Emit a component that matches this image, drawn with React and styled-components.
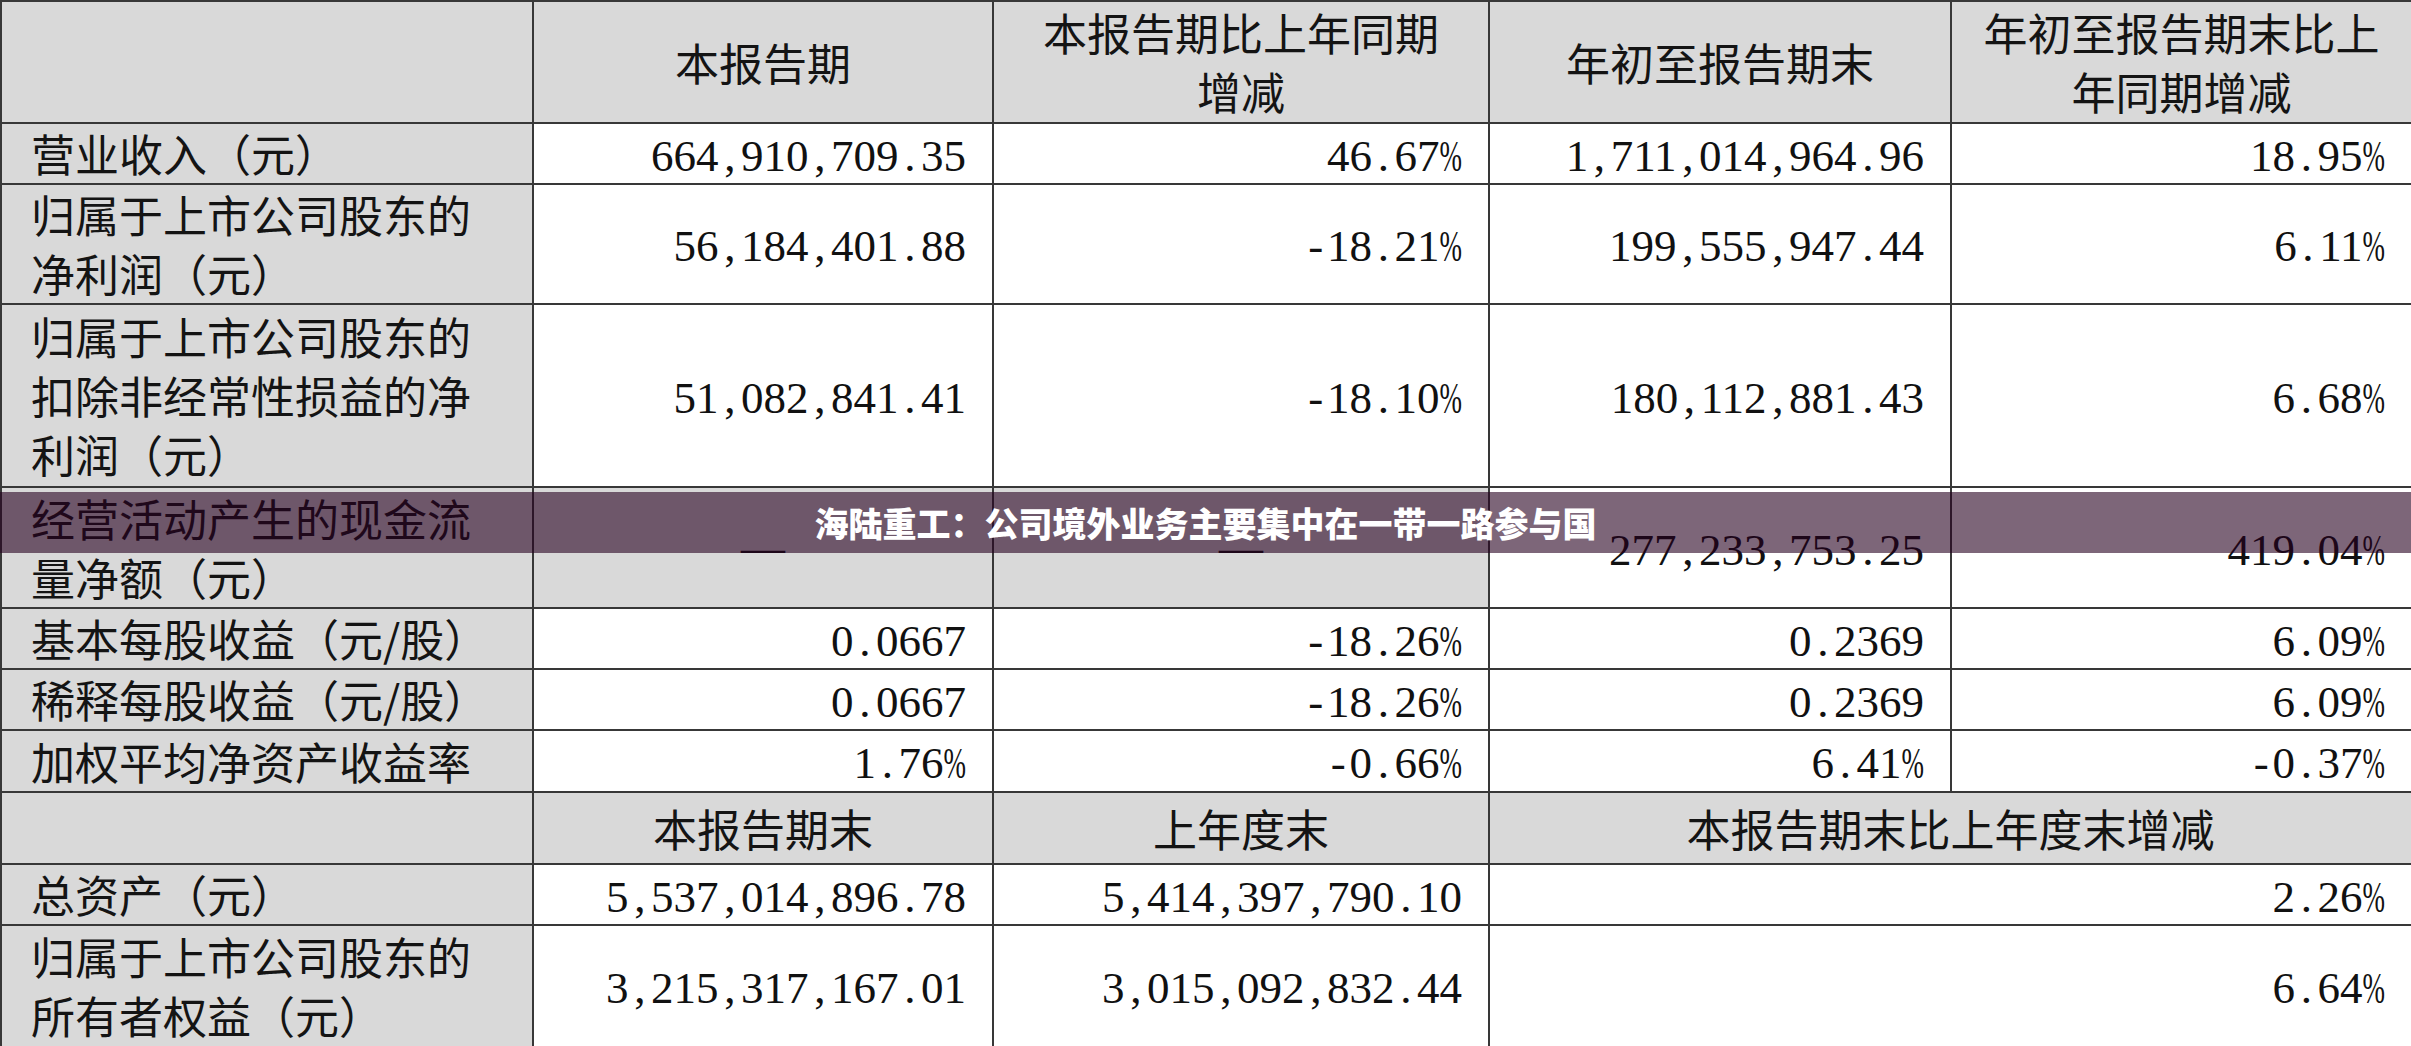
import React from 'react';
import styled, {createGlobalStyle} from 'styled-components';

const GlobalStyle = createGlobalStyle`
  html, body {
    margin: 0;
    padding: 0;
    background: #ffffff;
  }
  body {
    font-family: "Noto Sans CJK SC", sans-serif;
  }
`;

const COLUMNS = [532, 460, 496, 462, 461];

// kind: head (centred title), label (left text), num (right figure), dash (centred dash)
const ROWS = [
  {
    h: 122,
    cells: [
      {kind: 'head', shade: true, text: ''},
      {kind: 'head', shade: true, text: '本报告期'},
      {kind: 'head', shade: true, text: '本报告期比上年同期|增减'},
      {kind: 'head', shade: true, text: '年初至报告期末'},
      {kind: 'head', shade: true, text: '年初至报告期末比上|年同期增减'},
    ],
  },
  {
    h: 61,
    cells: [
      {kind: 'label', shade: true, text: '营业收入（元）'},
      {kind: 'num', text: '664,910,709.35'},
      {kind: 'num', text: '46.67%'},
      {kind: 'num', text: '1,711,014,964.96'},
      {kind: 'num', text: '18.95%'},
    ],
  },
  {
    h: 120,
    cells: [
      {kind: 'label', shade: true, text: '归属于上市公司股东的|净利润（元）'},
      {kind: 'num', text: '56,184,401.88'},
      {kind: 'num', text: '-18.21%'},
      {kind: 'num', text: '199,555,947.44'},
      {kind: 'num', text: '6.11%'},
    ],
  },
  {
    h: 183,
    cells: [
      {kind: 'label', shade: true, text: '归属于上市公司股东的|扣除非经常性损益的净|利润（元）'},
      {kind: 'num', text: '51,082,841.41'},
      {kind: 'num', text: '-18.10%'},
      {kind: 'num', text: '180,112,881.43'},
      {kind: 'num', text: '6.68%'},
    ],
  },
  {
    h: 121,
    cells: [
      {kind: 'label', shade: true, text: '经营活动产生的现金流|量净额（元）'},
      {kind: 'dash', shade: true, text: '—'},
      {kind: 'dash', shade: true, text: '—'},
      {kind: 'num', text: '277,233,753.25'},
      {kind: 'num', text: '419.04%'},
    ],
  },
  {
    h: 61,
    cells: [
      {kind: 'label', shade: true, text: '基本每股收益（元/股）'},
      {kind: 'num', text: '0.0667'},
      {kind: 'num', text: '-18.26%'},
      {kind: 'num', text: '0.2369'},
      {kind: 'num', text: '6.09%'},
    ],
  },
  {
    h: 61,
    cells: [
      {kind: 'label', shade: true, text: '稀释每股收益（元/股）'},
      {kind: 'num', text: '0.0667'},
      {kind: 'num', text: '-18.26%'},
      {kind: 'num', text: '0.2369'},
      {kind: 'num', text: '6.09%'},
    ],
  },
  {
    h: 62,
    cells: [
      {kind: 'label', shade: true, text: '加权平均净资产收益率'},
      {kind: 'num', text: '1.76%'},
      {kind: 'num', text: '-0.66%'},
      {kind: 'num', text: '6.41%'},
      {kind: 'num', text: '-0.37%'},
    ],
  },
  {
    h: 72,
    cells: [
      {kind: 'head', shade: true, text: ''},
      {kind: 'head', shade: true, text: '本报告期末'},
      {kind: 'head', shade: true, text: '上年度末'},
      {kind: 'head', shade: true, text: '本报告期末比上年度末增减', span: 2},
    ],
  },
  {
    h: 61,
    cells: [
      {kind: 'label', shade: true, text: '总资产（元）'},
      {kind: 'num', text: '5,537,014,896.78'},
      {kind: 'num', text: '5,414,397,790.10'},
      {kind: 'num', text: '2.26%', span: 2},
    ],
  },
  {
    h: 122,
    cells: [
      {kind: 'label', shade: true, text: '归属于上市公司股东的|所有者权益（元）'},
      {kind: 'num', text: '3,215,317,167.01'},
      {kind: 'num', text: '3,015,092,832.44'},
      {kind: 'num', text: '6.64%', span: 2},
    ],
  },
];

const ALIGN = {head: 'center', label: 'left', num: 'right', dash: 'center'};

const Figure = ({value}) => (
  <FigureText>
    {value.split('').map((ch, i) => {
      if (ch >= '0' && ch <= '9') return ch;
      if (ch === '%') return <Percent key={i}>%</Percent>;
      return <Mark key={i}>{ch}</Mark>;
    })}
  </FigureText>
);

const Lines = ({text}) =>
  text.split('|').map((line, i) => <Line key={i}>{line}</Line>);

export default function App() {
  return (
    <>
      <GlobalStyle />
      <Sheet>
        <Grid>
          <colgroup>
            {COLUMNS.map((w, i) => (
              <col key={i} style={{width: w}} />
            ))}
          </colgroup>
          <tbody>
            {ROWS.map((row, r) => (
              <Row key={r} $h={row.h}>
                {row.cells.map((cell, c) => (
                  <Cell
                    key={c}
                    colSpan={cell.span || 1}
                    $shade={cell.shade}
                    $align={ALIGN[cell.kind]}
                  >
                    {cell.kind === 'num' && <Figure value={cell.text} />}
                    {cell.kind === 'dash' && <Dash>{cell.text}</Dash>}
                    {(cell.kind === 'head' || cell.kind === 'label') && <Lines text={cell.text} />}
                  </Cell>
                ))}
              </Row>
            ))}
          </tbody>
        </Grid>
        <Banner>海陆重工：公司境外业务主要集中在一带一路参与国</Banner>
      </Sheet>
    </>
  );
}

const Sheet = styled.div`
  position: relative;
  width: 2411px;
  height: 1046px;
  overflow: hidden;
  background: #ffffff;
`;

const Grid = styled.table`
  width: 2411px;
  table-layout: fixed;
  border-collapse: collapse;
  border-spacing: 0;
`;

const Row = styled.tr`
  height: ${p => p.$h}px;
`;

const Cell = styled.td`
  box-sizing: border-box;
  border: 2px solid #383838;
  background: ${p => (p.$shade ? '#d9d9d9' : '#ffffff')};
  padding: 0 ${p => (p.$align === 'right' ? '26px' : '0')} 0
    ${p => (p.$align === 'left' ? '29px' : '0')};
  text-align: ${p => p.$align};
  vertical-align: middle;
  font-size: 44px;
  line-height: 1;
  color: #141414;
  white-space: nowrap;
`;

const Line = styled.div`
  height: 59px;
  line-height: 59px;
`;

const FigureText = styled.div`
  font-family: "Liberation Serif", "Times New Roman", serif;
  font-size: 45px;
  line-height: 54px;
  padding-top: 4px;
  color: #111111;
`;

const Mark = styled.span`
  display: inline-block;
  width: 0.5em;
  text-align: center;
`;

const Percent = styled.span`
  display: inline-block;
  margin: 0 -0.1667em;
  transform: scaleX(0.6);
`;

const Dash = styled.div`
  font-family: "Liberation Serif", serif;
  font-size: 44px;
  line-height: 54px;
  color: #111111;
`;

const Banner = styled.div`
  position: absolute;
  left: 0;
  right: 0;
  top: 492px;
  height: 61px;
  display: flex;
  align-items: center;
  justify-content: center;
  background: rgba(38, 0, 32, 0.6);
  color: #ffffff;
  font-family: "Noto Sans CJK SC", sans-serif;
  font-weight: 900;
  font-size: 34px;
  letter-spacing: 0;
`;
